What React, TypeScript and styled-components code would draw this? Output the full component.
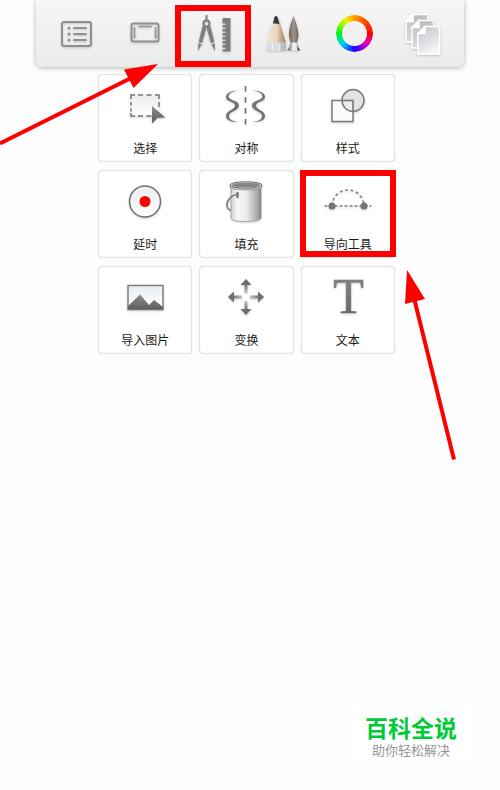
import React from "react";
import styled, { createGlobalStyle, css } from "styled-components";

const GlobalStyle = createGlobalStyle`
  * { box-sizing: border-box; }
  body {
    margin: 0;
    background: #fdfdfd;
    font-family: "Noto Sans CJK SC", "Noto Sans", sans-serif;
  }
`;

const RED = "#ff0000";

const Page = styled.div`
  position: relative;
  display: flex;
  flex-direction: column;
  min-height: 100vh;
  overflow: hidden;
`;

const Toolbar = styled.nav`
  display: grid;
  grid-template-columns: repeat(6, 1fr);
  margin: 0 36px;
  padding: 9px 7px 8px 5px;
  border-radius: 0 0 7px 7px;
  background: linear-gradient(#f6f6f6, #ebebeb);
  box-shadow: 0 1px 5px rgba(0, 0, 0, 0.3);
`;

const marked = css`
  &::after {
    content: "";
    position: absolute;
    border: 6px solid ${RED};
    pointer-events: none;
  }
`;

const ToolbarButton = styled.button<{ $marked?: boolean }>`
  position: relative;
  display: flex;
  justify-content: center;
  padding: 0;
  border: 0;
  background: none;
  ${(p) => p.$marked && marked}
  &::after {
    inset: -4px -2px -8px -5px;
  }
`;

const ToolGrid = styled.main`
  display: grid;
  grid-template-columns: repeat(3, 1fr);
  gap: 8px 7px;
  padding: 7px 105px 0 98px;
`;

const ToolCard = styled.button<{ $marked?: boolean }>`
  position: relative;
  display: flex;
  flex-direction: column;
  align-items: center;
  gap: 8px;
  padding: 5px 0 3px;
  border: 1px solid #e3e3e3;
  border-radius: 4px;
  background: #fff;
  box-shadow: 0 0 1px rgba(0, 0, 0, 0.12), inset 0 0 1px rgba(0, 0, 0, 0.12);
  font-family: inherit;
  ${(p) => p.$marked && marked}
  &::after {
    inset: -1px -2px 0 -2px;
  }
`;

const ToolLabel = styled.span`
  color: #1c1c1c;
  font-size: 12px;
  line-height: 20px;
  white-space: nowrap;
`;

const Icon = styled.svg`
  display: block;
  width: 50px;
  height: 50px;
  fill: none;
  overflow: visible;
  filter: drop-shadow(0 1px 1px rgba(0, 0, 0, 0.18));
`;

const ColorRing = styled.span`
  width: 37px;
  height: 37px;
  margin: 6px 0 7px 3px;
  border-radius: 50%;
  background: conic-gradient(#ff9a00, #ff0000 90deg, #e600c8 130deg, #1a00ff 180deg, #00d0ff 228deg, #00f020 270deg, #e8f800 325deg, #ff9a00);
  mask: radial-gradient(circle, transparent 12px, #000 13px);
`;

const Arrow = styled.svg<{ $left: number; $top: number }>`
  position: absolute;
  left: ${(p) => p.$left}px;
  top: ${(p) => p.$top}px;
  fill: ${RED};
  stroke: ${RED};
  pointer-events: none;
`;

const Brand = styled.footer`
  align-self: flex-end;
  margin: auto 25px 25px 0;
  padding: 12px 18px 6px 14px;
  background: #fff;
  font-family: "Liberation Sans", "Noto Sans CJK SC", sans-serif;
  text-align: center;
`;

const BrandName = styled.div`
  color: #00cb37;
  font-size: 23px;
  font-weight: 700;
  line-height: 27px;
`;

const BrandTagline = styled.div`
  color: #969696;
  font-size: 13px;
  line-height: 16px;
`;

const Gradients = () => (
  <defs>
    <linearGradient id="steel" x1="0" y1="0" x2="0" y2="1">
      <stop offset="0" stopColor="#8d8d8d" />
      <stop offset="1" stopColor="#5e5e5e" />
    </linearGradient>
    <linearGradient id="glass" x1="0" y1="0" x2="0" y2="1">
      <stop offset="0" stopColor="#e9edf0" />
      <stop offset="1" stopColor="#ffffff" />
    </linearGradient>
    <linearGradient id="stem" x1="0" y1="12" x2="0" y2="21" gradientUnits="userSpaceOnUse">
      <stop offset="0" stopColor="#6e6e6e" />
      <stop offset="1" stopColor="#c8c8c8" />
    </linearGradient>
    <linearGradient id="paper" x1="0" y1="0" x2="0.5" y2="1">
      <stop offset="0" stopColor="#bcc1c9" />
      <stop offset="1" stopColor="#f5f5f6" />
    </linearGradient>
    <linearGradient id="paperBack" x1="0" y1="0" x2="0" y2="1">
      <stop offset="0" stopColor="#bdbdbd" />
      <stop offset="1" stopColor="#dddddd" />
    </linearGradient>
    <linearGradient id="wood">
      <stop offset="0" stopColor="#f2e6d4" />
      <stop offset="0.5" stopColor="#ead8c0" />
      <stop offset="1" stopColor="#9b7857" />
    </linearGradient>
    <linearGradient id="bristle">
      <stop offset="0" stopColor="#6c6258" />
      <stop offset="0.5" stopColor="#a0968a" />
      <stop offset="1" stopColor="#6c6258" />
    </linearGradient>
    <linearGradient id="ferrule">
      <stop offset="0" stopColor="#4c5258" />
      <stop offset="0.25" stopColor="#9da3a8" />
      <stop offset="0.5" stopColor="#ffffff" />
      <stop offset="0.72" stopColor="#d5d8da" />
      <stop offset="0.85" stopColor="#3f454b" />
      <stop offset="1" stopColor="#8a8f94" />
    </linearGradient>
    <linearGradient id="bucket">
      <stop offset="0" stopColor="#d0d0d0" />
      <stop offset="0.2" stopColor="#f6f6f6" />
      <stop offset="0.5" stopColor="#eeeeee" />
      <stop offset="0.9" stopColor="#a4a4a4" />
      <stop offset="1" stopColor="#7c7c7c" />
    </linearGradient>
  </defs>
);

const MenuIcon = () => (
  <Icon viewBox="0 0 50 50" stroke="#909090">
    <Gradients />
    <rect x="11" y="13" width="29" height="24" rx="2" strokeWidth="2" />
    <path d="M23 19h12M23 25h12M23 31h12" strokeWidth="2" strokeLinecap="round" />
    <path d="M18 19h0M18 25h0M18 31h0" strokeWidth="3" strokeLinecap="round" />
  </Icon>
);

const FullscreenIcon = () => (
  <Icon viewBox="0 0 50 50" stroke="#909090">
    <rect x="11.5" y="14.5" width="27" height="18" rx="2" strokeWidth="2" />
    <path d="M18.5 17.5h13M14.5 18v11.5M35.5 18v11.5" strokeWidth="1.5" />
  </Icon>
);

const CompassIcon = () => (
  <Icon viewBox="0 0 50 50">
    <path d="M17.5 6v5" stroke="#858585" strokeWidth="2" />
    <circle cx="17.5" cy="14.5" r="3" stroke="#7c7c7c" strokeWidth="2" />
    <path d="M13.5 17l4 1.500-4.500 16-4 7.500.3-8zM21.500 17l-4 1.500 4.500 16 4 7.500-.3-8z" fill="#808080" />
    <path d="M9 33.500l4.500 1.500M26 33.500l-4.500 1.500" stroke="#f1f1f1" />
    <path
      d="M33.5 9h8v33.5h-8v-2h3v-2h-3V36h3v-1.5h-3V32h3v-1.5h-3V28h3v-1.5h-3V24h3v-1.5h-3V20h3v-1.5h-3V16h3v-1.5h-3z"
      fill="#7d7d7d"
    />
  </Icon>
);

const BrushesIcon = () => (
  <Icon viewBox="0 0 50 50">
    <path d="M17 7.5Q18.5 6.500 19.500 9L27 34v7.500H8V34L15 9Q15.500 7.500 17 7.500z" fill="url(#wood)" />
    <path d="M14 14.500L15.500 8q1.500-2 3 0l2 7.500q-3-1.500-6.500-1z" fill="#35383c" />
    <path d="M8 34l3-1.500 3 2 3.500-2 3.500 2 3-2 3 1.500v7.500H8z" fill="#dcdddf" />
    <path d="M13.5 34.500v7M21 34.500v7" stroke="#f7f7f7" />
    <path d="M21.5 34.500l2.500-2 3 1.500v7.500h-5.500z" fill="#b9bcc0" />
    <path d="M34.5 7Q29.500 19 30 27l1.500 7h6.500l1.500-7Q39.500 19 34.500 7z" fill="url(#bristle)" />
    <path d="M31.5 33.500h6.500q.5 5 3.500 8H28q3-3 3.500-8z" fill="url(#ferrule)" />
  </Icon>
);

const LayersIcon = () => (
  <Icon viewBox="0 0 50 50" stroke="#fff" strokeWidth="1.5">
    {[
      { x: 9, y: 5, fill: "url(#paperBack)" },
      { x: 15, y: 11, fill: "url(#paperBack)" },
      { x: 21, y: 17, fill: "url(#paper)" },
    ].map(({ x, y, fill }) => (
      <g key={x} transform={`translate(${x} ${y})`}>
        <path d="M7 .5h14.5v27.500H0V7.500z" fill={fill} />
        <path d="M7 .5v7H0z" fill="#fff" />
      </g>
    ))}
  </Icon>
);

const SelectIcon = () => (
  <Icon viewBox="0 0 50 50">
    <rect x="11" y="15" width="28" height="21" fill="url(#glass)" />
    <path
      d="M11 19v-4h4M18 15h5M26.5 15h5M35 15h4v4M11 22v3.5M11 28.5v3M11 33v3h4M18 36h5M26.5 36h5M39 22v5"
      stroke="#747474"
      strokeWidth="1.5"
    />
    <path d="M32 26l13.5 11.500-8 .5-5.500 5.500z" fill="url(#steel)" />
  </Icon>
);

const SymmetryIcon = () => (
  <Icon viewBox="0 0 50 50">
    <path d="M24.5 6v40" stroke="#6b6b6b" strokeWidth="1.5" strokeDasharray="5.5 5.5" />
    {["", "translate(49 0) scale(-1 1)"].map((transform) => (
      <path
        key={transform}
        transform={transform}
        d="M17 10.500C9 10.500 5 13.500 5 17 5 22 14 21.500 14 25.500 14 30 5 30 5 36 5 40 9.500 42 17 42 11 41 8 39.500 8 36 8 31 18 31 18 25.500 18 20 7.500 20.500 7.500 16.500 7.500 13.500 11 11.500 17 10.500z"
        fill="#737373"
      />
    ))}
  </Icon>
);

const ShapesIcon = () => (
  <Icon viewBox="0 0 50 50" stroke="#7b7b7b" strokeWidth="1.5">
    <rect x="9" y="20.5" width="21" height="21" fill="#fafafa" />
    <circle cx="30" cy="20.5" r="11" fill="#dfe4e8" fillOpacity="0.6" />
    <path d="M19 20.5h11v11" />
  </Icon>
);

const RecordIcon = () => (
  <Icon viewBox="0 0 50 50">
    <circle cx="25" cy="25.5" r="15.5" fill="url(#glass)" stroke="#707070" strokeWidth="1.5" />
    <circle cx="25" cy="25.5" r="5.5" fill={RED} />
  </Icon>
);

const BucketIcon = () => (
  <Icon viewBox="0 0 50 50">
    <path d="M10 10v32q1 3.500 15 3.500t15-3.500V10z" fill="url(#bucket)" stroke="#909090" strokeWidth="0.7" />
    <path d="M9 9v2q2 3 16 3t16-3V9z" fill="#c9c9c9" stroke="#8a8a8a" strokeWidth="0.7" />
    <ellipse cx="25" cy="9" rx="16" ry="3.2" fill="#e5e5e5" stroke="#6c6c6c" />
    <ellipse cx="25" cy="9" rx="14" ry="2.3" fill="#858585" />
    <path d="M16.5 18.500C10 19 5.500 25 6 29.500Q6.500 33.500 10 34.500" stroke="#777" strokeWidth="1.5" />
    <path d="M16.5 17v4" stroke="#777" strokeWidth="2.5" strokeLinecap="round" />
  </Icon>
);

const GuideIcon = () => (
  <Icon viewBox="0 0 50 50">
    <path d="M1.5 30h47" stroke="#808080" strokeWidth="1.5" strokeDasharray="3 2" />
    <path d="M9 30a16 16 0 0 1 32 0" stroke="#858585" strokeWidth="1.5" strokeDasharray="3 2.5" />
    <circle cx="9" cy="30" r="3.5" fill="#747474" />
    <circle cx="41" cy="30" r="3.5" fill="#747474" />
  </Icon>
);

const ImageIcon = () => (
  <Icon viewBox="0 0 50 50">
    <rect x="8" y="13.5" width="35" height="24" fill="url(#glass)" stroke="#808080" strokeWidth="1.5" />
    <path d="M8 34L20 22.5 29 33l5-5 9 7v2.5H8z" fill="url(#steel)" />
  </Icon>
);

const TransformIcon = () => (
  <Icon viewBox="0 0 50 50">
    {[0, 90, 180, 270].map((angle) => (
      <g key={angle} transform={`rotate(${angle} 25 25)`}>
        <path d="M25 7l5.5 6h-11z" fill="#6e6e6e" />
        <path d="M23.5 12h3v9h-3z" fill="url(#stem)" />
      </g>
    ))}
  </Icon>
);

const TextIcon = () => (
  <Icon viewBox="0 0 50 50">
    <text
      x="25.5"
      y="41"
      textAnchor="middle"
      fontFamily="'Liberation Serif', serif"
      fontSize="50"
      fill="url(#steel)"
      stroke="#777"
      strokeWidth="0.6"
    >
      T
    </text>
  </Icon>
);

const toolbarItems = [
  { name: "菜单", icon: <MenuIcon /> },
  { name: "全屏", icon: <FullscreenIcon /> },
  { name: "工具", icon: <CompassIcon />, marked: true },
  { name: "画笔", icon: <BrushesIcon /> },
  { name: "颜色", icon: <ColorRing /> },
  { name: "图层", icon: <LayersIcon /> },
];

const tools = [
  { label: "选择", icon: <SelectIcon /> },
  { label: "对称", icon: <SymmetryIcon /> },
  { label: "样式", icon: <ShapesIcon /> },
  { label: "延时", icon: <RecordIcon /> },
  { label: "填充", icon: <BucketIcon /> },
  { label: "导向工具", icon: <GuideIcon />, marked: true },
  { label: "导入图片", icon: <ImageIcon /> },
  { label: "变换", icon: <TransformIcon /> },
  { label: "文本", icon: <TextIcon /> },
];

export default function App() {
  return (
    <>
      <GlobalStyle />
      <Page>
        <Toolbar>
          {toolbarItems.map((item) => (
            <ToolbarButton key={item.name} type="button" aria-label={item.name} $marked={item.marked}>
              {item.icon}
            </ToolbarButton>
          ))}
        </Toolbar>
        <ToolGrid>
          {tools.map((tool) => (
            <ToolCard key={tool.label} type="button" $marked={tool.marked}>
              {tool.icon}
              <ToolLabel>{tool.label}</ToolLabel>
            </ToolCard>
          ))}
        </ToolGrid>
        <Brand>
          <BrandName>百科全说</BrandName>
          <BrandTagline>助你轻松解决</BrandTagline>
        </Brand>
        <Arrow $left={0} $top={60} width="160" height="90" aria-hidden="true">
          <path d="M0 83.5L131 18" strokeWidth="4" />
          <path d="M158 4L124 9.5 133.5 28z" stroke="none" />
        </Arrow>
        <Arrow $left={400} $top={268} width="60" height="195" aria-hidden="true">
          <path d="M54 191.5L14 30" strokeWidth="4" />
          <path d="M7 2L5 36 25 31z" stroke="none" />
        </Arrow>
      </Page>
    </>
  );
}
